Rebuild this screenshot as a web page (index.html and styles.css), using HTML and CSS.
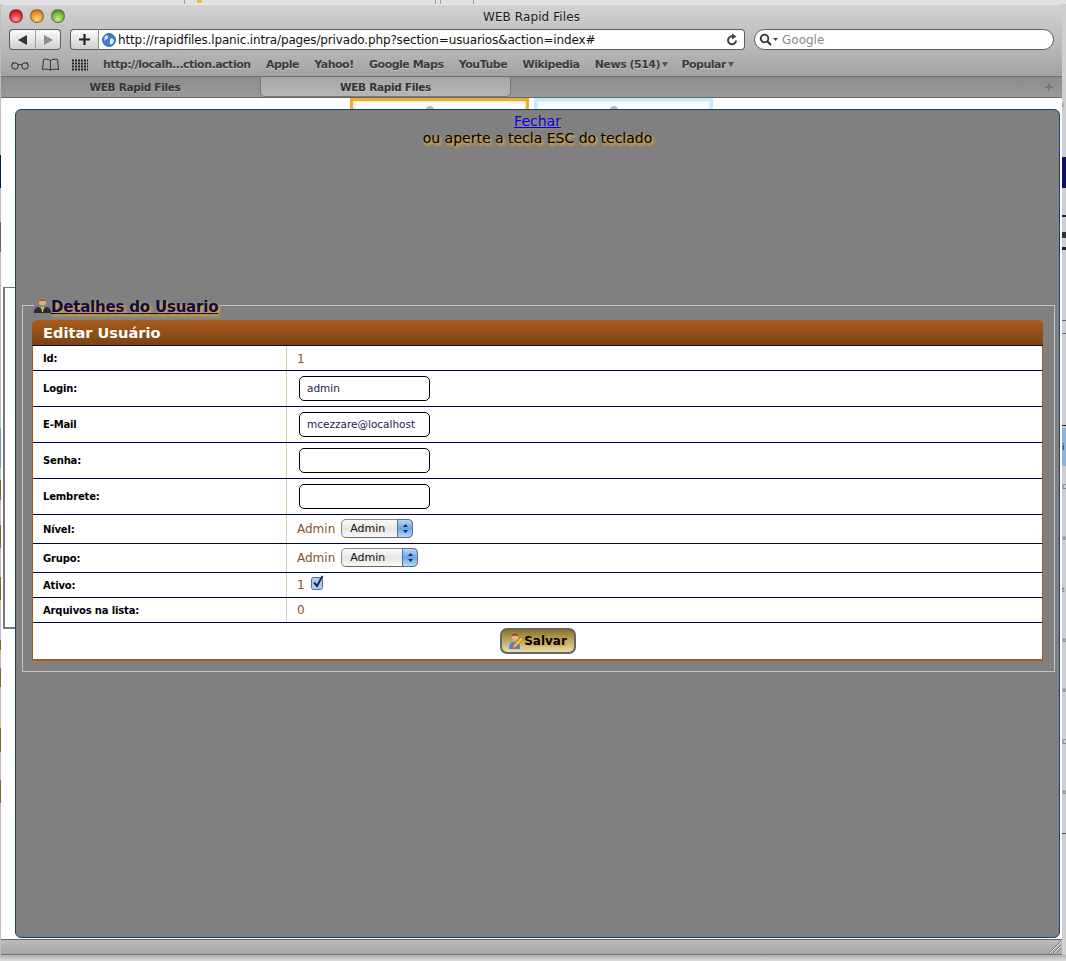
FILE: index.html

```html
<!DOCTYPE html>
<html lang="pt">
<head>
  <meta charset="UTF-8" />
  <title>WEB Rapid Files</title>
  <link rel="stylesheet" href="styles.css">
</head>
<body>
  <div class="desk-top">
    <span class="desk-line line-a"></span>
    <span class="desk-dot"></span>
    <span class="desk-line line-b"></span>
    <span class="desk-line line-c"></span>
    <span class="desk-line line-d"></span>
  </div>

  <div class="desk">
    <div class="strip-left">
      <i class="tick tick-navy"></i>
      <i class="tick tick-gray"></i>
      <i class="tick tick-blue"></i>
      <i class="tick tick-o1"></i>
      <i class="tick tick-o2"></i>
      <i class="tick tick-o3"></i>
      <i class="tick tick-o4"></i>
      <i class="tick tick-o5"></i>
      <i class="tick tick-o6"></i>
      <i class="tick tick-o7"></i>
    </div>

    <div class="window">
      <div class="titlebar">
        <div class="lights">
          <span class="light light-red"></span>
          <span class="light light-yellow"></span>
          <span class="light light-green"></span>
        </div>
        <div class="title">WEB Rapid Files</div>
      </div>

      <div class="toolbar">
        <div class="nav-btns">
          <button class="tool-btn back-btn">
            <svg width="12" height="12" viewBox="0 0 12 12"><path d="M1 6 L10 1 V11 Z" fill="#333"/></svg>
          </button>
          <button class="tool-btn fwd-btn">
            <svg width="12" height="12" viewBox="0 0 12 12"><path d="M11 6 L2 1 V11 Z" fill="#8c8c8c"/></svg>
          </button>
        </div>
        <div class="url-group">
          <button class="tool-btn plus-btn">
            <svg width="13" height="13" viewBox="0 0 13 13"><path d="M6.5 1 V12 M1 6.5 H12" stroke="#222" stroke-width="2.2"/></svg>
          </button>
          <div class="url-field">
            <svg class="globe" width="14" height="14" viewBox="0 0 14 14">
              <circle cx="7" cy="7" r="6.5" fill="#3f7fd0"/>
              <path d="M3 3 C5 2 7 3 6 5 C5 7 3 6 2 8 Z M8 6 C10 5 12 6 12 8 C11 11 9 12 8 11 Z" fill="#dfe9f5"/>
              <circle cx="7" cy="7" r="6.5" fill="none" stroke="#2a5590" stroke-width=".8"/>
            </svg>
            <span class="url-text">http://rapidfiles.lpanic.intra/pages/privado.php?section=usuarios&amp;action=index#</span>
            <svg class="reload" width="12" height="13" viewBox="0 0 12 13">
              <path d="M10 7.5 A4 4 0 1 1 6.5 3.4" fill="none" stroke="#444" stroke-width="2"/>
              <path d="M6 0.5 L10.5 3.5 L6 6.5 Z" fill="#444"/>
            </svg>
          </div>
        </div>
        <div class="search-field">
          <svg width="20" height="13" viewBox="0 0 20 13">
            <circle cx="5.5" cy="5.5" r="3.8" fill="none" stroke="#333" stroke-width="1.8"/>
            <path d="M8.3 8.3 L12 12" stroke="#333" stroke-width="2"/>
            <path d="M14 5 H19 L16.5 8 Z" fill="#444"/>
          </svg>
          <span class="search-text">Google</span>
        </div>
      </div>

      <div class="bookmarks">
        <svg class="bm-icon" width="18" height="10" viewBox="0 0 18 10">
          <circle cx="4" cy="6" r="3.2" fill="none" stroke="#333" stroke-width="1"/>
          <circle cx="14" cy="6" r="3.2" fill="none" stroke="#333" stroke-width="1"/>
          <path d="M7 5 Q9 4 11 5 M1 5 L2 2 M17 5 L16 2" fill="none" stroke="#333"/>
        </svg>
        <svg class="bm-icon" width="17" height="13" viewBox="0 0 17 13">
          <path d="M8.5 2.5 C6.5 1 3.5 1 1.5 1.5 L.5 11.5 C3 11 6.5 11 8.5 12 C10.5 11 14 11 16.5 11.5 L15.5 1.5 C13.5 1 10.5 1 8.5 2.5 Z M8.5 2.5 V12" fill="none" stroke="#333"/>
        </svg>
        <svg class="bm-icon" width="16" height="12" viewBox="0 0 16 12">
          <path d="M0 1.5 H16 M0 4.5 H16 M0 7.5 H16 M0 10.5 H16" stroke="#222" stroke-width="2" stroke-dasharray="2 1"/>
        </svg>
        <a class="bm bm-first">http://localh...ction.action</a>
        <a class="bm">Apple</a>
        <a class="bm">Yahoo!</a>
        <a class="bm">Google Maps</a>
        <a class="bm">YouTube</a>
        <a class="bm">Wikipedia</a>
        <a class="bm">News (514)<span class="caret"></span></a>
        <a class="bm">Popular<span class="caret"></span></a>
      </div>

      <div class="tabbar">
        <div class="tab tab-first">WEB Rapid Files</div>
        <div class="tab tab-active">WEB Rapid Files</div>
        <div class="tab-fill">
          <svg width="10" height="10" viewBox="0 0 10 10"><path d="M5 1 V9 M1 5 H9" stroke="#777" stroke-width="2"/></svg>
        </div>
      </div>

      <div class="page">
        <div class="thumbs">
          <div class="thumb thumb-gold"><span class="thumb-bump"></span></div>
          <div class="thumb thumb-blue"><span class="thumb-bump"></span></div>
        </div>
        <div class="left-box"></div>

        <div class="modal">
          <div class="modal-head">
            <a href="#" class="close-link">Fechar</a><br>
            ou aperte a tecla ESC do teclado
          </div>

          <fieldset class="details">
            <legend>
              <svg width="17" height="18" viewBox="0 0 17 18">
                <path d="M0 16 C0 11 3 10 5 10 L8.5 13 L12 10 C14 10 17 11 17 16 Z" fill="#2c2c2c"/>
                <path d="M7 10 H10 L9 15 H8 Z" fill="#e2c060"/>
                <circle cx="8.5" cy="5" r="3.6" fill="#e0b080"/>
                <path d="M5 4.5 C5 1 12 1 12 4.5 C10 3 7 3 5 4.5 Z" fill="#7a4a20"/>
              </svg><a href="#" class="legend-link">Detalhes do Usuario</a>
            </legend>

            <div class="panel">
              <h2 class="panel-title">Editar Usuário</h2>
              <table class="form-table">
                <tr class="row-id"><th>Id:</th><td>1</td></tr>
                <tr class="row-h35"><th>Login:</th><td><input class="text-input" type="text" value="admin"></td></tr>
                <tr class="row-h35"><th>E-Mail</th><td><input class="text-input" type="text" value="mcezzare@localhost"></td></tr>
                <tr class="row-h35"><th>Senha:</th><td><input class="text-input" type="text"></td></tr>
                <tr class="row-h35"><th>Lembrete:</th><td><input class="text-input" type="text"></td></tr>
                <tr class="row-h28"><th>Nível:</th><td><span class="cell-inline">Admin
                  <span class="select select-nivel">Admin<span class="stepper"><svg width="7" height="11" viewBox="0 0 7 11"><path d="M3.5 1 L6 4 H1 Z M3.5 10 L6 7 H1 Z" fill="#1a2a50"/></svg></span></span></span></td></tr>
                <tr class="row-h28"><th>Grupo:</th><td><span class="cell-inline">Admin
                  <span class="select select-grupo">Admin<span class="stepper"><svg width="7" height="11" viewBox="0 0 7 11"><path d="M3.5 1 L6 4 H1 Z M3.5 10 L6 7 H1 Z" fill="#1a2a50"/></svg></span></span></span></td></tr>
                <tr class="row-h24"><th>Ativo:</th><td><span class="cell-inline">1
                  <svg class="check" width="13" height="15" viewBox="0 0 13 15">
                    <rect x=".5" y="2.5" width="11" height="12" rx="2" fill="#a9cdf0" stroke="#5a6f90"/>
                    <path d="M3 7.5 L6 11 L11.5 1" fill="none" stroke="#1a2a60" stroke-width="2"/>
                  </svg></span></td></tr>
                <tr class="row-h24"><th>Arquivos na lista:</th><td>0</td></tr>
              </table>
              <div class="panel-foot">
                <button class="save-btn">
                  <svg width="16" height="18" viewBox="0 0 16 18">
                    <path d="M1 17 C1 12 3 10 5 10 H9 C11 10 12 12 12 17 Z" fill="#4a86d8"/>
                    <circle cx="7" cy="5" r="3.4" fill="#e4b48a"/>
                    <path d="M3.6 4.5 C3.6 .5 10.4 .5 10.4 4.5 C8.5 3 5.5 3 3.6 4.5 Z" fill="#7a4420"/>
                    <path d="M15.5 7 L8 15 L4.5 16.5 L5.5 13 L13 5 Z" fill="#f4c040" stroke="#a05a10" stroke-width=".6"/>
                  </svg>Salvar
                </button>
              </div>
            </div>
          </fieldset>
        </div>
      </div>

      <div class="statusbar">
        <svg class="grip" width="14" height="14" viewBox="0 0 14 14">
          <path d="M1 13 L13 1 M5 13 L13 5 M9 13 L13 9" stroke="#777" stroke-width="1"/>
          <path d="M2 13 L13 2 M6 13 L13 6 M10 13 L13 10" stroke="#ddd" stroke-width="1"/>
        </svg>
      </div>
    </div>

    <div class="strip-right">
      <i class="rt rt-top">i</i>
      <i class="rt rt-navy"></i>
      <i class="rt rt-bar"></i>
      <i class="rt rt-block"></i>
      <i class="rt rt-bar2"></i>
      <i class="rt rt-thin1"></i>
      <i class="rt rt-thin2"></i>
      <i class="rt rt-thin3"></i>
      <i class="rt rt-bluebox">i</i>
      <i class="rt rt-first">C</i>
      <i class="rt rt-wide">x</i>
      <i class="rt rt-wide2">t</i>
      <i class="rt rt-letter">x</i>
      <i class="rt rt-letter">x</i>
      <i class="rt rt-wide2">C</i>
      <i class="rt rt-letter">x</i>
      <i class="rt rt-end"></i>
    </div>
  </div>

  <div class="desk-bottom"></div>
</body>
</html>
```

FILE: styles.css

```css
html, body {
  margin: 0;
  height: 961px;
  overflow: hidden;
}
body {
  background: #d4d4d4;
  font-family: "DejaVu Sans", Verdana, sans-serif;
  color: #000;
}

/* what shows of the windows behind */
.desk-top {
  height: 4px;
  display: flex;
  background: #e2e2e2;
}
.desk-line {
  width: 1px;
  background: #9a9a9a;
}
.line-a { margin-left: 184px; }
.line-b { margin-left: 233px; }
.line-c { margin-left: 4px; }
.line-d { margin-left: 32px; }
.desk-dot {
  width: 5px;
  height: 3px;
  margin-left: 12px;
  background: #e0c040;
}
.desk {
  display: flex;
  height: 951px;
}
.desk-bottom {
  height: 6px;
  background: linear-gradient(#b0b0b0, #dcdcdc);
}
.strip-left {
  width: 1px;
  display: flex;
  flex-direction: column;
  background: #bdbdbd;
}
.tick { display: block; }
.tick-navy { height: 33px; margin-top: 151px; background: #101060; }
.tick-gray { height: 30px; margin-top: 34px; background: #666; }
.tick-blue { height: 40px; margin-top: 176px; background: #6f97c8; }
.tick-o1 { height: 20px; margin-top: 12px; background: #7d6a30; }
.tick-o2 { height: 23px; margin-top: 25px; background: #7d6a30; }
.tick-o3 { height: 23px; margin-top: 29px; background: #7d6a30; }
.tick-o4 { height: 10px; margin-top: 40px; background: #7d6a30; }
.tick-o5 { height: 19px; margin-top: 18px; background: #7d6a30; }
.tick-o6 { height: 24px; margin-top: 41px; background: #7d6a30; }
.tick-o7 { height: 23px; margin-top: 28px; background: #7d6a30; }
.strip-right {
  width: 4px;
  overflow: hidden;
  display: flex;
  flex-direction: column;
  background: #cfcfcf;
  font-size: 6.5px;
  color: #555;
}
.rt { display: block; font-style: normal; line-height: 12px; white-space: nowrap; }
.rt-top { margin-top: 95px; }
.rt-navy { height: 31px; margin-top: 46px; background: #101060; }
.rt-bar { height: 2px; margin-top: 27px; background: #222; }
.rt-block { height: 6px; margin-top: 15px; background: #333; }
.rt-bar2 { height: 3px; margin-top: 9px; background: #222; }
.rt-thin1 { height: 1px; margin-top: 70px; background: #666; }
.rt-thin2 { height: 1px; margin-top: 12px; background: #666; }
.rt-thin3 { height: 1px; margin-top: 91px; background: #101060; }
.rt-bluebox { height: 38px; margin-top: 2px; line-height: 38px; font-size: 9px; background: #8fb2dc; color: #123; }
.rt-first { margin-top: 15px; }
.rt-wide { margin-top: 39px; }
.rt-wide2 { margin-top: 40px; }
.rt-letter { margin-top: 38px; }
.rt-end { height: 1px; margin-top: 35px; background: #555; }

/* browser window */
.window {
  width: 1061px;
  display: flex;
  flex-direction: column;
  border-radius: 5px 5px 0 0;
  overflow: hidden;
  background: #aaa;
}
.titlebar {
  height: 24px;
  flex: none;
  position: relative;
  display: flex;
  align-items: center;
  justify-content: center;
  background: linear-gradient(#d2d2d2, #c4c4c4);
  border-top: 1px solid #e8e8e8;
  box-sizing: border-box;
}
.lights {
  position: absolute;
  left: 8px;
  top: 4px;
  display: flex;
  gap: 7px;
}
.light {
  width: 14px;
  height: 14px;
  border-radius: 50%;
  border: 1px solid rgba(60, 60, 60, .5);
  box-sizing: border-box;
}
.light-red { background: radial-gradient(circle at 50% 75%, #ff9a90, #d8242a 60%, #9a1018); }
.light-yellow { background: radial-gradient(circle at 50% 75%, #ffd890, #e88a20 60%, #a86010); }
.light-green { background: radial-gradient(circle at 50% 75%, #c8f090, #6cb030 60%, #407a18); }
.title {
  font-size: 12px;
  letter-spacing: .1px;
  color: #1a1a1a;
  text-shadow: 0 1px 0 rgba(255, 255, 255, .4);
}
.toolbar {
  height: 28px;
  flex: none;
  display: flex;
  align-items: flex-start;
  padding: 1px 0 0 8px;
  box-sizing: border-box;
  background: linear-gradient(#c4c4c4, #b2b2b2);
}
.tool-btn {
  display: flex;
  align-items: center;
  justify-content: center;
  height: 21px;
  padding: 0;
  background: linear-gradient(#fbfbfb, #d0d0d0);
  border: 1px solid #5c5c5c;
  box-sizing: border-box;
}
.nav-btns { display: flex; }
.back-btn { width: 27px; border-radius: 4px 0 0 4px; border-right-color: #a0a0a0; }
.fwd-btn { width: 25px; border-radius: 0 4px 4px 0; border-left: 0; }
.url-group { display: flex; margin-left: 9px; }
.plus-btn { width: 28px; border-radius: 4px 0 0 4px; border-right: 0; }
.url-field {
  width: 647px;
  height: 21px;
  display: flex;
  align-items: center;
  box-sizing: border-box;
  padding: 0 6px 0 3px;
  background: #fff;
  border: 1px solid #5c5c5c;
  border-left-color: #888;
  border-radius: 0 4px 4px 0;
}
.url-text {
  flex: 1;
  margin-left: 2px;
  padding-top: 1px;
  font-size: 12px;
  letter-spacing: -.15px;
  color: #111;
  white-space: nowrap;
}
.search-field {
  width: 300px;
  height: 21px;
  margin-left: 9px;
  display: flex;
  align-items: center;
  gap: 3px;
  box-sizing: border-box;
  padding-left: 4px;
  background: #fff;
  border: 1px solid #5c5c5c;
  border-radius: 11px;
}
.search-text {
  padding-top: 1px;
  font-size: 12px;
  color: #8a8a8a;
}
.bookmarks {
  height: 21px;
  flex: none;
  display: flex;
  align-items: center;
  padding-left: 10px;
  padding-bottom: 3px;
  box-sizing: border-box;
  background: linear-gradient(#b2b2b2, #a2a2a2);
  border-bottom: 1px solid #6e6e6e;
}
.bm-icon { margin-right: 13px; flex: none; }
.bm {
  margin-right: 15.4px;
  font-size: 11px;
  font-weight: bold;
  letter-spacing: -.5px;
  color: #3c3c3c;
  text-shadow: 0 1px 0 rgba(255, 255, 255, .35);
  white-space: nowrap;
}
.bm-first { margin-left: 2px; }
.caret {
  display: inline-block;
  margin-left: 2px;
  margin-right: -2px;
  vertical-align: 1px;
  border-left: 3.5px solid transparent;
  border-right: 3.5px solid transparent;
  border-top: 5px solid #555;
}
.tabbar {
  height: 20px;
  flex: none;
  display: flex;
  background: linear-gradient(#8c8c8c, #9a9a9a);
  border-bottom: 1px solid #666;
}
.tab {
  width: 259px;
  display: flex;
  align-items: center;
  justify-content: center;
  font-size: 10.5px;
  font-weight: bold;
  letter-spacing: -.3px;
  color: #333;
  text-shadow: 0 1px 0 rgba(255, 255, 255, .25);
}
.tab-first {
  box-sizing: border-box;
  padding-left: 9px;
}
.tab-active {
  width: 251px;
  background: linear-gradient(#a6a6a6, #b6b6b6);
  border: 1px solid #777;
  border-top: 0;
  border-radius: 0 0 5px 5px;
  box-sizing: border-box;
}
.tab-fill {
  flex: 1;
  display: flex;
  align-items: center;
  justify-content: flex-end;
  padding-right: 8px;
}
.page {
  flex: 1;
  position: relative;
  background: #fff;
  overflow: hidden;
}
.thumbs {
  display: flex;
  gap: 5px;
  padding-left: 349px;
}
.thumb {
  width: 179px;
  height: 20px;
  box-sizing: border-box;
  border: 3px solid;
  background: #fff;
  box-shadow: inset 0 0 4px rgba(230, 190, 90, .7);
}
.thumb-gold { border-color: #e8b030; }
.thumb-blue {
  border-color: #c4ecfa;
  box-shadow: inset 0 0 4px rgba(170, 225, 245, .7);
}
.thumb-bump {
  display: block;
  width: 8px;
  height: 8px;
  margin: 5px 0 0 73px;
  border-radius: 50%;
  background: #aebccc;
}
.left-box {
  width: 30px;
  height: 342px;
  margin: 169px 0 0 2px;
  box-sizing: border-box;
  border: 1px solid #777;
  border-width: 1px 1px 2px 2px;
}

/* modal over the page */
.modal {
  position: absolute;
  left: 14px;
  top: 11px;
  width: 1045px;
  height: 829px;
  box-sizing: border-box;
  background: #808080;
  border: 1px solid #1c3f6e;
  border-radius: 6px;
  padding: 3px 4px 0 6px;
}
.modal-head {
  height: 182px;
  margin: 0 1px 0 -1px;
  text-align: center;
  font-size: 14px;
  line-height: 17px;
  color: #000;
  text-shadow: 1px 2px 2px #d8a040, 2px 2px 3px #d8a040;
}
.close-link {
  color: #0000ee;
  text-shadow: 1px 1px 2px rgba(200, 150, 60, .6);
}
.details {
  margin: 0;
  padding: 5px 11px 10px 9px;
  border: 1px solid #c4c4c4;
  min-width: 0;
}
.details legend {
  display: flex;
  align-items: flex-end;
  padding: 0;
  margin-left: 2px;
  height: 20px;
}
.legend-link {
  font-size: 15px;
  line-height: 15px;
  font-weight: bold;
  letter-spacing: -.2px;
  color: #0c0c50;
  text-shadow: 1px 2px 2px #d8a040, 2px 2px 3px #d8a040;
}
.panel {
  background: #fff;
  border: 1px solid #a85a1a;
  border-top: 0;
  border-bottom: 2px solid #a85a1a;
  border-radius: 5px 5px 0 0;
}
.panel-title {
  margin: 0 -1px;
  height: 26px;
  line-height: 26px;
  padding-left: 11px;
  font-size: 14.6px;
  font-weight: bold;
  color: #fff;
  background: linear-gradient(#a85c1c, #7c4212);
  border-radius: 5px 5px 0 0;
  border-bottom: 1px solid #0a0a40;
  box-sizing: border-box;
}
.form-table {
  width: 100%;
  border-collapse: collapse;
}
.form-table th {
  width: 243px;
  padding: 0 0 0 10px;
  text-align: left;
  font-size: 10px;
  font-weight: bold;
  letter-spacing: -.15px;
  border-right: 1px solid #dccdb0;
  border-bottom: 1px solid #000050;
}
.form-table td {
  padding: 0 0 0 10px;
  font-size: 12px;
  color: #855426;
  border-bottom: 1px solid #000050;
}
.row-id { height: 24px; }
.row-h24 { height: 25px; }
.row-h35 { height: 36px; }
.row-h28 { height: 29px; }
.row-id th, .row-id td, .row-h24 th, .row-h28 th {
  padding-top: 2px;
}
.cell-inline {
  display: flex;
  align-items: center;
  gap: 6px;
}
.text-input {
  display: block;
  width: 131px;
  height: 25px;
  margin: 0 0 0 2px;
  padding: 0 0 0 7px;
  box-sizing: border-box;
  font-family: "DejaVu Sans", Verdana, sans-serif;
  font-size: 10.5px;
  color: #1c1c50;
  background: #fff;
  border: 1px solid #000;
  border-radius: 5px;
  outline: none;
}
.select {
  position: relative;
  display: block;
  height: 19px;
  line-height: 18px;
  padding-left: 8px;
  box-sizing: border-box;
  font-size: 11px;
  color: #111;
  background: linear-gradient(#fafafa, #e6e6e6 50%, #f8f8f8);
  border: 1px solid #8a8a8a;
  border-bottom-color: #666;
  border-radius: 5px;
}
.select-nivel { width: 72px; }
.select-grupo { width: 77px; }
.stepper {
  position: absolute;
  right: -1px;
  top: -1px;
  width: 16px;
  height: 19px;
  display: flex;
  align-items: center;
  justify-content: center;
  background: linear-gradient(#bcd8f8, #6aa4e8 50%, #b8d8f8);
  border: 1px solid #5c6f90;
  border-radius: 0 5px 5px 0;
  box-sizing: border-box;
}
.check { margin-top: -4px; }
.panel-foot {
  height: 36px;
  display: flex;
  justify-content: center;
  align-items: flex-start;
  padding-top: 5px;
  box-sizing: border-box;
}
.save-btn {
  width: 76px;
  height: 26px;
  display: flex;
  align-items: center;
  justify-content: center;
  gap: 0;
  padding: 0;
  font-family: "DejaVu Sans", Verdana, sans-serif;
  font-size: 12px;
  font-weight: bold;
  color: #000;
  text-shadow: 1px 1px 2px #e0a040;
  background: linear-gradient(#8c7428, #ecdca8);
  border: 2px solid #666;
  border-radius: 7px;
}
.statusbar {
  height: 16px;
  flex: none;
  display: flex;
  justify-content: flex-end;
  align-items: flex-end;
  background: linear-gradient(#bcbcbc, #a6a6a6);
  border-top: 1px solid #666;
  border-bottom: 1px solid #777;
  box-sizing: border-box;
}
```
